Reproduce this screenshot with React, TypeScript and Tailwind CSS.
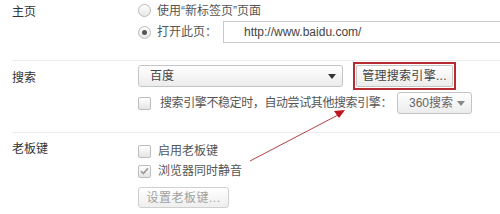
import React from 'react';

function Radio({ checked }: { checked?: boolean }) {
  return (
    <span className="w-[13px] h-[13px] rounded-full border border-[#b9b9b9] bg-gradient-to-b from-white to-[#e6e6e6] flex items-center justify-center shrink-0">
      {checked && <span className="w-[5px] h-[5px] rounded-full bg-[#555]" />}
    </span>
  );
}

function Checkbox({ checked }: { checked?: boolean }) {
  return (
    <span className="w-[13px] h-[13px] rounded-[2px] border border-[#bcbcbc] bg-gradient-to-b from-white to-[#e4e4e4] flex items-center justify-center shrink-0">
      {checked && (
        <svg width="9" height="8" viewBox="0 0 9 8">
          <path d="M1 4.2 L3.4 6.5 L8 1.3" fill="none" stroke="#9a9a9a" strokeWidth="1.6" />
        </svg>
      )}
    </span>
  );
}

function Caret({ color }: { color: string }) {
  return (
    <svg width="8" height="5" viewBox="0 0 8 5">
      <path d="M0 0 L8 0 L4 5 Z" fill={color} />
    </svg>
  );
}

export default function App() {
  return (
    <div
      className="relative w-[500px] h-[214px] bg-white overflow-hidden text-[12px] text-[#555]"
      style={{ fontFamily: '"Liberation Sans", "Noto Sans CJK SC", sans-serif' }}
    >
      {/* 主页 */}
      <div className="ml-[12px] h-[61px] border-b border-[#ececec] flex">
        <div className="w-[126px] mt-[2px] leading-[20px] text-[#333]">主页</div>
        <div className="flex-1 flex flex-col">
          <div className="h-[21px] flex items-center gap-[6px]">
            <Radio />
            <span className="leading-[20px]">使用“新标签页”页面</span>
          </div>
          <div className="h-[22px] flex items-center">
            <Radio checked />
            <span className="ml-[6px] w-[66px] leading-[20px]">打开此页：</span>
            <div className="h-[22px] flex-1 -mr-[40px] border border-[#c9c9c9] flex items-center pl-[20px] text-[#444]">
              http://www.baidu.com/
            </div>
          </div>
        </div>
      </div>

      {/* 搜索 */}
      <div className="ml-[12px] h-[72px] border-b border-[#ececec] flex">
        <div className="w-[126px] mt-[7px] leading-[20px] text-[#333]">搜索</div>
        <div className="flex-1 flex flex-col pt-[1px]">
          <div className="h-[28px] flex items-center">
            <div className="w-[205px] h-[22px] rounded-[3px] border border-[#c4c4c4] bg-gradient-to-b from-white to-[#ececec] flex items-center justify-between pl-[11px] pr-[6px] text-[#444]">
              <span>百度</span>
              <Caret color="#333" />
            </div>
            <div className="ml-[10px] w-[103px] h-[28px] border-2 border-[#b82a31] p-[1px]">
              <div className="h-full rounded-[2px] border border-[#c4c4c4] bg-gradient-to-b from-white to-[#ececec] flex items-center justify-center text-[#444] tracking-[0.3px]">
                管理搜索引擎...
              </div>
            </div>
          </div>
          <div className="mt-[2px] h-[22px] flex items-center">
            <Checkbox />
            <span className="ml-[9px] w-[237px] tracking-[-0.4px] leading-[20px]">
              搜索引擎不稳定时，自动尝试其他搜索引擎：
            </span>
            <div className="w-[75px] h-[22px] rounded-[3px] border border-[#c4c4c4] bg-gradient-to-b from-white to-[#ececec] flex items-center justify-between pl-[11px] pr-[6px] text-[#666]">
              <span>360搜索</span>
              <Caret color="#888" />
            </div>
          </div>
        </div>
      </div>

      {/* 老板键 */}
      <div className="ml-[12px] flex">
        <div className="w-[126px] mt-[6px] leading-[20px] text-[#333]">老板键</div>
        <div className="flex-1 flex flex-col pt-[8px]">
          <div className="h-[20px] flex items-center gap-[7px]">
            <Checkbox />
            <span className="leading-[20px]">启用老板键</span>
          </div>
          <div className="h-[20px] flex items-center gap-[7px]">
            <Checkbox checked />
            <span className="leading-[20px]">浏览器同时静音</span>
          </div>
          <div className="mt-[6px] w-[91px] h-[21px] rounded-[3px] border border-[#cfcfcf] bg-gradient-to-b from-white to-[#eeeeee] flex items-center justify-center text-[#a0a0a0] tracking-[0.5px]">
            设置老板键...
          </div>
        </div>
      </div>

      {/* annotation arrow */}
      <svg className="absolute left-0 top-0 pointer-events-none" width="500" height="214" viewBox="0 0 500 214">
        <line x1="250" y1="161" x2="338" y2="115" stroke="#b5404a" strokeWidth="1" />
        <path d="M345 110 L334 111 L339 118 Z" fill="#c0141c" />
      </svg>
    </div>
  );
}
